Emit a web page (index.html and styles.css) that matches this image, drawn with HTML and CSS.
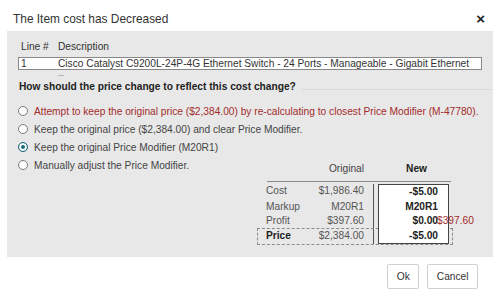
FILE: index.html
```html
<!DOCTYPE html>
<html lang="en">
<head>
    <meta charset="UTF-8">
    <meta name="viewport" content="width=device-width, initial-scale=1.0">
    <title>The Item cost has Decreased</title>
    <link rel="stylesheet" href="styles.css">
</head>
<body>
    <div class="dialog">
        <div class="titlebar">
            <span class="title">The Item cost has Decreased</span>
            <span class="close">&times;</span>
        </div>

        <div class="panel">
            <div class="line-head">
                <span class="col-line">Line #</span>
                <span>Description</span>
            </div>
            <div class="line-box">
                <span class="col-line">1</span>
                <span>Cisco Catalyst C9200L-24P-4G Ethernet Switch - 24 Ports - Manageable - Gigabit Ethernet</span>
            </div>
            <div class="more">...</div>

            <div class="question">How should the price change to reflect this cost change?</div>

            <div class="options">
                <label class="option warn"><input type="radio" name="mode">Attempt to keep the original price ($2,384.00) by re-calculating to closest Price Modifier (M-47780).</label>
                <label class="option"><input type="radio" name="mode">Keep the original price ($2,384.00) and clear Price Modifier.</label>
                <label class="option"><input type="radio" name="mode" checked>Keep the original Price Modifier (M20R1)</label>
                <label class="option"><input type="radio" name="mode">Manually adjust the Price Modifier.</label>
            </div>

            <div class="compare">
                <div class="cmp-head">
                    <span></span>
                    <span class="orig">Original</span>
                    <span></span>
                    <span class="new">New</span>
                </div>
                <div class="cmp-body">
                    <div class="cmp-row">
                        <span class="lbl">Cost</span>
                        <span class="orig">$1,986.40</span>
                        <span class="gap"></span>
                        <span class="new">-$5.00</span>
                    </div>
                    <div class="cmp-row">
                        <span class="lbl">Markup</span>
                        <span class="orig">M20R1</span>
                        <span class="gap"></span>
                        <span class="new">M20R1</span>
                    </div>
                    <div class="cmp-row">
                        <span class="lbl">Profit</span>
                        <span class="orig">$397.60</span>
                        <span class="gap"></span>
                        <span class="new has-delta">$0.00<span class="delta">$397.60</span></span>
                    </div>
                    <div class="cmp-row total">
                        <span class="lbl">Price</span>
                        <span class="orig">$2,384.00</span>
                        <span class="gap"></span>
                        <span class="new">-$5.00</span>
                    </div>
                </div>
            </div>
        </div>

        <div class="actions">
            <button class="btn">Ok</button>
            <button class="btn">Cancel</button>
        </div>
    </div>
</body>
</html>
```

FILE: styles.css
```css
* {
    margin: 0;
    padding: 0;
    box-sizing: border-box;
}

body {
    font-family: "Liberation Sans", Arial, sans-serif;
    font-size: 10.2px;
    color: #333;
    background: #fff;
}

.dialog {
    width: 500px;
    height: 305px;
}

.titlebar {
    display: flex;
    justify-content: space-between;
    align-items: center;
    height: 31px;
    padding: 6px 15px 0 13px;
}

.title {
    font-size: 11.9px;
    color: #333;
}

.close {
    font-size: 15px;
    font-weight: bold;
    color: #222;
    line-height: 1;
}

.panel {
    margin: 0 7px;
    background: #e8e8e8;
    padding: 10px 11px 13px;
}

.line-head,
.line-box {
    display: flex;
    white-space: nowrap;
}

.line-head {
    line-height: 12px;
    padding-left: 3px;
}

.col-line {
    width: 37px;
    flex: none;
}

.line-box {
    margin-top: 4px;
    height: 13px;
    line-height: 11px;
    padding-left: 2px;
    background: #fff;
    border: 1px solid #888;
    color: #333;
}

.more {
    height: 9px;
    padding-left: 40px;
    font-size: 8px;
    line-height: 8px;
    letter-spacing: -0.3px;
    color: #555;
}

.question {
    display: flex;
    align-items: center;
    gap: 6px;
    margin: 2px -10px 0 1px;
    line-height: 12px;
    font-weight: bold;
    color: #222;
    white-space: nowrap;
}

.question::after {
    content: "";
    flex: 1;
    margin-top: 4px;
    border-top: 1px solid #d9d9d9;
}

.options {
    margin-top: 9px;
}

.option {
    display: flex;
    align-items: center;
    height: 18px;
    white-space: nowrap;
    color: #444;
}

.option.warn {
    color: #a32b2b;
}

.option input {
    appearance: none;
    flex: none;
    width: 10px;
    height: 10px;
    margin-right: 6px;
    border: 1px solid #7a7a7a;
    border-radius: 50%;
    background: #fff;
}

.option input:checked {
    border-color: #1c6d7c;
    background: #1c6d7c;
    box-shadow: inset 0 0 0 2px #fff;
}

.compare {
    width: 194px;
    margin: -12px 30px 0 auto;
}

.cmp-head {
    display: grid;
    grid-template-columns: 45px 52px 14px 71px 2px;
    height: 20px;
    margin: 0 1px 0 9px;
    padding-bottom: 5px;
    line-height: 14px;
    border-bottom: 1px solid #8a8a8a;
    color: #444;
}

.cmp-head .orig {
    text-align: right;
}

.cmp-head .new {
    padding-right: 22px;
    text-align: right;
    font-weight: bold;
    color: #222;
}

.cmp-body {
    margin-top: 2px;
}

.cmp-row {
    display: grid;
    grid-template-columns: 54px 52px 14px 71px 3px;
    line-height: 14.5px;
    white-space: nowrap;
}

.cmp-row .lbl {
    padding-left: 8px;
    color: #555;
}

.cmp-row .orig {
    text-align: right;
    color: #555;
}

.cmp-row .gap {
    margin-right: 4px;
    border-right: 1px solid #555;
}

.cmp-row .new {
    padding-right: 10px;
    text-align: right;
    font-weight: bold;
    color: #222;
    background: #fff;
    border-left: 1px solid #444;
    border-right: 1px solid #444;
}

.cmp-row:first-child .new {
    border-top: 1px solid #444;
}

.cmp-row:last-child .new {
    border-bottom: 1px solid #444;
}

.cmp-row.total {
    outline: 1px dashed #8c8c8c;
}

.cmp-row.total .lbl {
    font-weight: bold;
    color: #222;
}

.has-delta {
    position: relative;
}

.delta {
    position: absolute;
    left: 58px;
    top: 0;
    font-weight: normal;
    color: #a32b2b;
}

.actions {
    display: flex;
    justify-content: flex-end;
    gap: 8px;
    padding: 7px 22px 0 0;
}

.btn {
    height: 25px;
    padding: 0 8.5px;
    font-family: inherit;
    font-size: 10.2px;
    color: #333;
    background: #fff;
    border: 1px solid #d0d0d0;
    border-radius: 2px;
}
```
